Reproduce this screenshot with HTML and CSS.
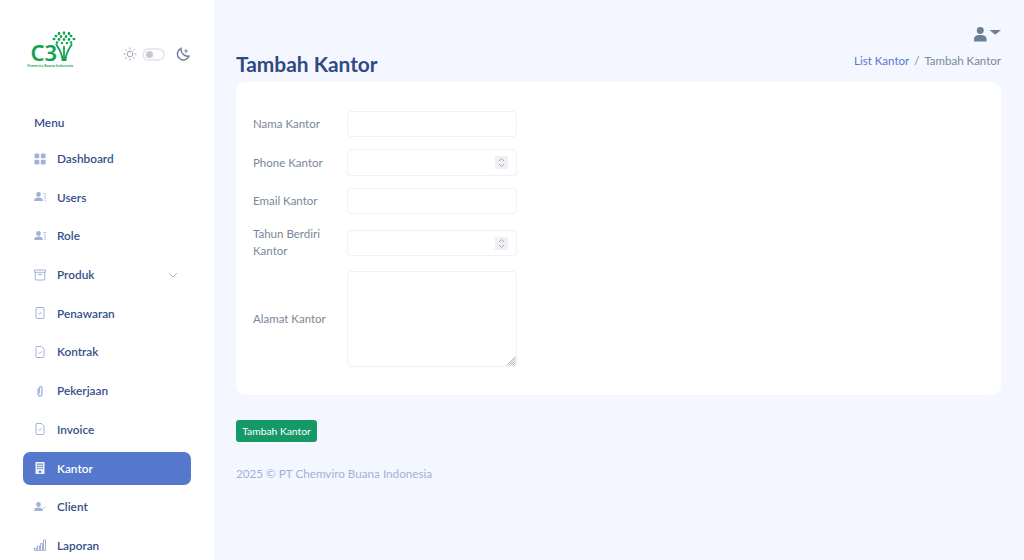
FILE: index.html
```html
<!DOCTYPE html>
<html lang="id">
<head>
<meta charset="utf-8">
<title>Tambah Kantor</title>
<link rel="stylesheet" href="styles.css">
</head>
<body>
<div class="app">
  <aside class="sidebar">
    <div class="brand">
      <svg class="logo" width="50" height="38" viewBox="0 0 50 38" aria-label="C3 Chemviro Buana Indonesia">
        <text x="4.500" y="30" class="logo-c3">C3</text>
        <path class="logo-trunk" d="M36.500 30C36.500 22 33 18 30 13M39.500 30C39.500 22 43 18 46 13M38 30V15" />
        <g class="logo-leaf">
          <ellipse cx="33" cy="2.500" rx="1.300" ry="1.800"/><ellipse cx="38" cy="2" rx="1.300" ry="1.800"/><ellipse cx="43" cy="2.500" rx="1.300" ry="1.800"/>
          <ellipse cx="30" cy="5" rx="1.500" ry="1.300"/><ellipse cx="35" cy="5.500" rx="1.300" ry="1.500"/><ellipse cx="40" cy="5.500" rx="1.300" ry="1.500"/><ellipse cx="45" cy="5" rx="1.500" ry="1.300"/>
          <ellipse cx="28" cy="8" rx="1.500" ry="1.200"/><ellipse cx="33" cy="8.500" rx="1.400" ry="1.400"/><ellipse cx="38" cy="8.500" rx="1.400" ry="1.400"/><ellipse cx="43" cy="8.500" rx="1.400" ry="1.400"/><ellipse cx="48" cy="8" rx="1.500" ry="1.200"/>
          <ellipse cx="31" cy="11.500" rx="1.300" ry="1.300"/><ellipse cx="36" cy="12" rx="1.200" ry="1.300"/><ellipse cx="41" cy="12" rx="1.200" ry="1.300"/><ellipse cx="45" cy="11.500" rx="1.300" ry="1.300"/>
        </g>
        <text x="1" y="35.500" class="logo-sub">Chemviro Buana Indonesia</text>
      </svg>
      <div class="theme">
        <svg class="ti" width="14" height="14" viewBox="0 0 14 14"><circle cx="7" cy="7" r="2.800"/><path d="M7 0.500V2.500M7 11.500V13.500M0.500 7H2.500M11.500 7H13.500M2.400 2.400L3.800 3.800M10.200 10.200L11.600 11.600M2.400 11.600L3.800 10.200M10.200 3.800L11.600 2.400"/></svg>
        <span class="switch"><span class="knob"></span></span>
        <svg class="moon" width="14" height="14" viewBox="0 0 14 14"><path d="M5 1.500A6 6 0 1 0 13 9.200A7 7 0 0 1 5 1.500Z"/><path class="star" d="M10 1L10.600 3.400L13 4L10.600 4.600L10 7L9.400 4.600L7 4L9.400 3.400Z"/></svg>
      </div>
    </div>
    <div class="menu-title">Menu</div>
    <nav class="menu">
      <a class="item"><svg class="ic solid" viewBox="0 0 12 12"><rect x="0.500" y="0.500" width="4.800" height="4.800" rx="1"/><rect x="6.800" y="0.500" width="4.800" height="4.800" rx="1"/><rect x="0.500" y="6.800" width="4.800" height="4.800" rx="1"/><rect x="6.800" y="6.800" width="4.800" height="4.800" rx="1"/></svg>Dashboard</a>
      <a class="item"><svg class="ic solid" viewBox="0 0 12 12"><circle cx="4.500" cy="3.500" r="2.400"/><path d="M0 10C0 7.500 2 6.500 4.500 6.500S9 7.500 9 10Z"/><path class="thin" d="M9.200 2.500H12M9.800 4.800H12M10 7H12M10.500 9.300H12"/></svg>Users</a>
      <a class="item"><svg class="ic solid" viewBox="0 0 12 12"><circle cx="4.500" cy="3.500" r="2.400"/><path d="M0 10C0 7.500 2 6.500 4.500 6.500S9 7.500 9 10Z"/><path class="thin" d="M9.200 2.500H12M9.800 4.800H12M10 7H12M10.500 9.300H12"/></svg>Role</a>
      <a class="item"><svg class="ic line" viewBox="0 0 12 12"><path d="M0.500 1H11.500V3.300H0.500ZM1.300 3.300V11H10.700V3.300M4 5.500H8"/></svg>Produk<svg class="chev" width="10" height="6" viewBox="0 0 10 6"><path d="M1 1L5 5L9 1"/></svg></a>
      <a class="item"><svg class="ic line" viewBox="0 0 12 12"><rect x="2" y="0.500" width="8" height="11" rx="1"/><path d="M4.500 6.300L5.600 7.300L7.500 5"/></svg>Penawaran</a>
      <a class="item"><svg class="ic line" viewBox="0 0 12 12"><path d="M3 0.500H7.500L10 3V10.500A1 1 0 0 1 9 11.500H3A1 1 0 0 1 2 10.500V1.500A1 1 0 0 1 3 0.500Z"/><path d="M4.500 6.500L5.600 7.500L7.500 5.300"/></svg>Kontrak</a>
      <a class="item"><svg class="ic clip" viewBox="0 0 12 12"><path d="M4 3.500V8.500A2 2.500 0 0 0 8 8.500V2.500A1.300 1.500 0 0 0 5.500 2.500V8.500"/></svg>Pekerjaan</a>
      <a class="item"><svg class="ic line" viewBox="0 0 12 12"><path d="M3 0.500H7.500L10 3V10.500A1 1 0 0 1 9 11.500H3A1 1 0 0 1 2 10.500V1.500A1 1 0 0 1 3 0.500Z"/><path d="M4.500 6.500L5.600 7.500L7.500 5.300"/></svg>Invoice</a>
      <a class="item active"><svg class="ic solid" viewBox="0 0 12 12"><path fill-rule="evenodd" d="M1.500 0H10.500V12H1.500ZM3 1.500V2.700H4.600V1.500ZM5.200 1.500V2.700H6.800V1.500ZM7.400 1.500V2.700H9V1.500ZM3 3.700V4.900H4.600V3.700ZM5.200 3.700V4.900H6.800V3.700ZM7.400 3.700V4.900H9V3.700ZM3 5.900V7.100H4.600V5.900ZM5.200 5.900V7.100H6.800V5.900ZM7.400 5.900V7.100H9V5.900ZM4.800 8.700V10.800H7.200V8.700Z"/></svg>Kantor</a>
      <a class="item"><svg class="ic solid" viewBox="0 0 12 12"><circle cx="4.500" cy="3.500" r="2.400"/><path d="M0 10C0 7.500 2 6.500 4.500 6.500S9 7.500 9 10Z"/><path class="thin" d="M8.800 6.500L9.800 7.500L12 5.300"/></svg>Client</a>
      <a class="item"><svg class="ic line" viewBox="0 0 12 12"><path d="M0.500 9H2.500V11.500H0.500ZM3.500 7H5.500V11.500H3.500ZM6.500 4.500H8.500V11.500H6.500ZM9.500 1H11.500V11.500H9.500Z"/></svg>Laporan</a>
    </nav>
  </aside>
  <main class="main">
    <div class="topbar">
      <svg class="user" width="27" height="14.500" viewBox="0 0 28 15"><circle cx="6.500" cy="3.700" r="3.600"/><path d="M0 15V12.500C0 9.500 2.500 8.300 6.500 8.300S13 9.500 13 12.500V15Z"/><path d="M16 3H28L22 8Z"/></svg>
    </div>
    <div class="page-head">
      <h1>Tambah Kantor</h1>
      <div class="crumbs"><a class="crumb-link">List Kantor</a><span class="sep">/</span><span>Tambah Kantor</span></div>
    </div>
    <form class="card">
      <div class="row"><label for="a">Nama Kantor</label><input id="a" type="text"></div>
      <div class="row"><label for="b">Phone Kantor</label><span class="field"><input id="b" type="number"><svg class="spin" width="13" height="13" viewBox="0 0 13 13"><path d="M4 5L6.500 2.500L9 5M4 8L6.500 10.500L9 8"/></svg></span></div>
      <div class="row"><label for="c">Email Kantor</label><input id="c" type="email"></div>
      <div class="row"><label for="d">Tahun Berdiri Kantor</label><span class="field"><input id="d" type="number"><svg class="spin" width="13" height="13" viewBox="0 0 13 13"><path d="M4 5L6.500 2.500L9 5M4 8L6.500 10.500L9 8"/></svg></span></div>
      <div class="row"><label for="e">Alamat Kantor</label><span class="field"><textarea id="e"></textarea><svg class="grip" width="10" height="10" viewBox="0 0 10 10"><path d="M9.500 0.500L0.500 9.500M9.500 2.500L2.500 9.500M9.500 4.500L4.500 9.500M9.500 6.500L6.500 9.500M9.500 8.500L8.500 9.500"/></svg></span></div>
    </form>
    <div class="actions"><button class="btn" type="button">Tambah Kantor</button></div>
    <footer class="foot">2025 © PT Chemviro Buana Indonesia</footer>
  </main>
</div>
</body>
</html>
```

FILE: styles.css
```css
* { box-sizing: border-box; }
html, body { margin: 0; height: 100%; overflow: hidden; }
body {
  font-family: "Lato", "Noto Sans", sans-serif;
  font-size: 12px;
  background: #f4f7ff;
  color: #344f8a;
}
.app { display: flex; height: 560px; overflow: hidden; }

.sidebar { width: 214px; flex: none; background: #fff; padding: 0 23px; height: 560px; overflow: hidden; }
.brand { display: flex; align-items: flex-start; padding: 31px 0 0 3px; height: 112px; }
.logo { flex: none; display: block; }
.logo-c3 { font-family: "Noto Sans", sans-serif; font-size: 22px; font-weight: 600; fill: #12a24f; }
.logo-sub { font-family: "Noto Sans", sans-serif; font-size: 3.500px; font-weight: 600; fill: #12a24f; }
.logo-trunk { fill: none; stroke: #12a24f; stroke-width: 1.800; }
.logo-leaf { fill: #12a24f; }
.theme { display: flex; align-items: center; margin: 16px 0 0 46.500px; }
.ti { fill: none; stroke: #9aa4b5; stroke-width: 1; }
.switch { width: 23px; height: 13px; margin-left: 5px; border: 2px solid #e7e9f1; border-radius: 7px; display: flex; align-items: center; padding-left: 2px; }
.knob { width: 7px; height: 7px; border-radius: 50%; background: #c9c9cc; }
.moon { margin-left: 11px; fill: none; stroke: #6d7c99; stroke-width: 1.400; }
.star { fill: #6d7c99; stroke: none; }

.menu-title { padding-left: 11px; font-size: 11.800px; line-height: 22px; font-weight: 600; height: 23px; }
.menu { display: flex; flex-direction: column; gap: 5.700px; margin-top: 7px; }
.item { display: flex; align-items: center; flex: none; height: 33px; padding: 0 13px 0 11px; border-radius: 7px; font-weight: 600; font-size: 11.800px; color: #344f8a; }
.item.active { background: #5577cc; color: #fff; }
.ic { width: 12px; height: 12px; margin-right: 11px; flex: none; }
.ic.solid { fill: #a3b2d4; stroke: none; }
.ic.line { fill: none; stroke: #a3b2d4; stroke-width: 1; }
.ic.clip { fill: none; stroke: #a3b2d4; stroke-width: 1.300; }
.thin { fill: none; stroke: #a3b2d4; stroke-width: 0.800; }
.active .ic.solid { fill: #eef2fb; }
.chev { margin-left: auto; fill: none; stroke: #b3b9c6; stroke-width: 1; }

.main { flex: 1; min-width: 0; padding: 0 23px 0 22px; display: flex; flex-direction: column; }
.topbar { height: 41px; padding: 27px 0 0; display: flex; justify-content: flex-end; flex: none; }
.user { fill: #6b7f95; flex: none; }
.page-head { display: flex; justify-content: space-between; align-items: flex-start; height: 41px; flex: none; }
h1 { margin: 9px 0 0; font-size: 20.900px; line-height: 27px; font-weight: 700; color: #2f4a83; }
.crumbs { display: flex; margin-top: 11px; line-height: 17px; font-size: 11.500px; color: #7b8794; }
.crumb-link { color: #5577cc; }
.sep { margin: 0 5px; }

.card { background: #fff; border-radius: 10px; padding: 28.750px 17px 28px; display: flex; flex-direction: column; gap: 12px; height: 313px; flex: none; }
.row { display: flex; align-items: center; }
.row label { width: 94px; flex: none; margin-top: -1px; padding-right: 14px; line-height: 17px; font-size: 11.500px; color: #7a8798; }
.field { position: relative; display: block; flex: none; }
input, textarea { display: block; width: 170px; height: 26.500px; flex: none; border: 1px solid #edf1f9; border-radius: 4px; background: #fff; outline: 0; padding: 4px 9px; margin: 0; font: inherit; }
textarea { height: 96px; resize: none; }
input[type="number"] { appearance: textfield; }
input[type="number"]::-webkit-inner-spin-button { appearance: none; display: none; }
.spin { position: absolute; right: 9.500px; top: 7px; background: #eef0f4; fill: none; stroke: #8e98a6; stroke-width: 0.800; }
.grip { position: absolute; right: 1px; bottom: 1px; fill: none; stroke: #8f949b; stroke-width: 0.700; pointer-events: none; }

.actions { display: flex; margin-top: 25px; flex: none; }
.btn { height: 22px; width: 81px; padding: 0; border: 1px solid #159b68; border-radius: 2.500px; background: #149967; color: #fff; font: inherit; font-size: 10.300px; font-weight: 400; }
.foot { margin-top: 23px; font-size: 11.700px; line-height: 17px; color: #a3b0d6; }
```
